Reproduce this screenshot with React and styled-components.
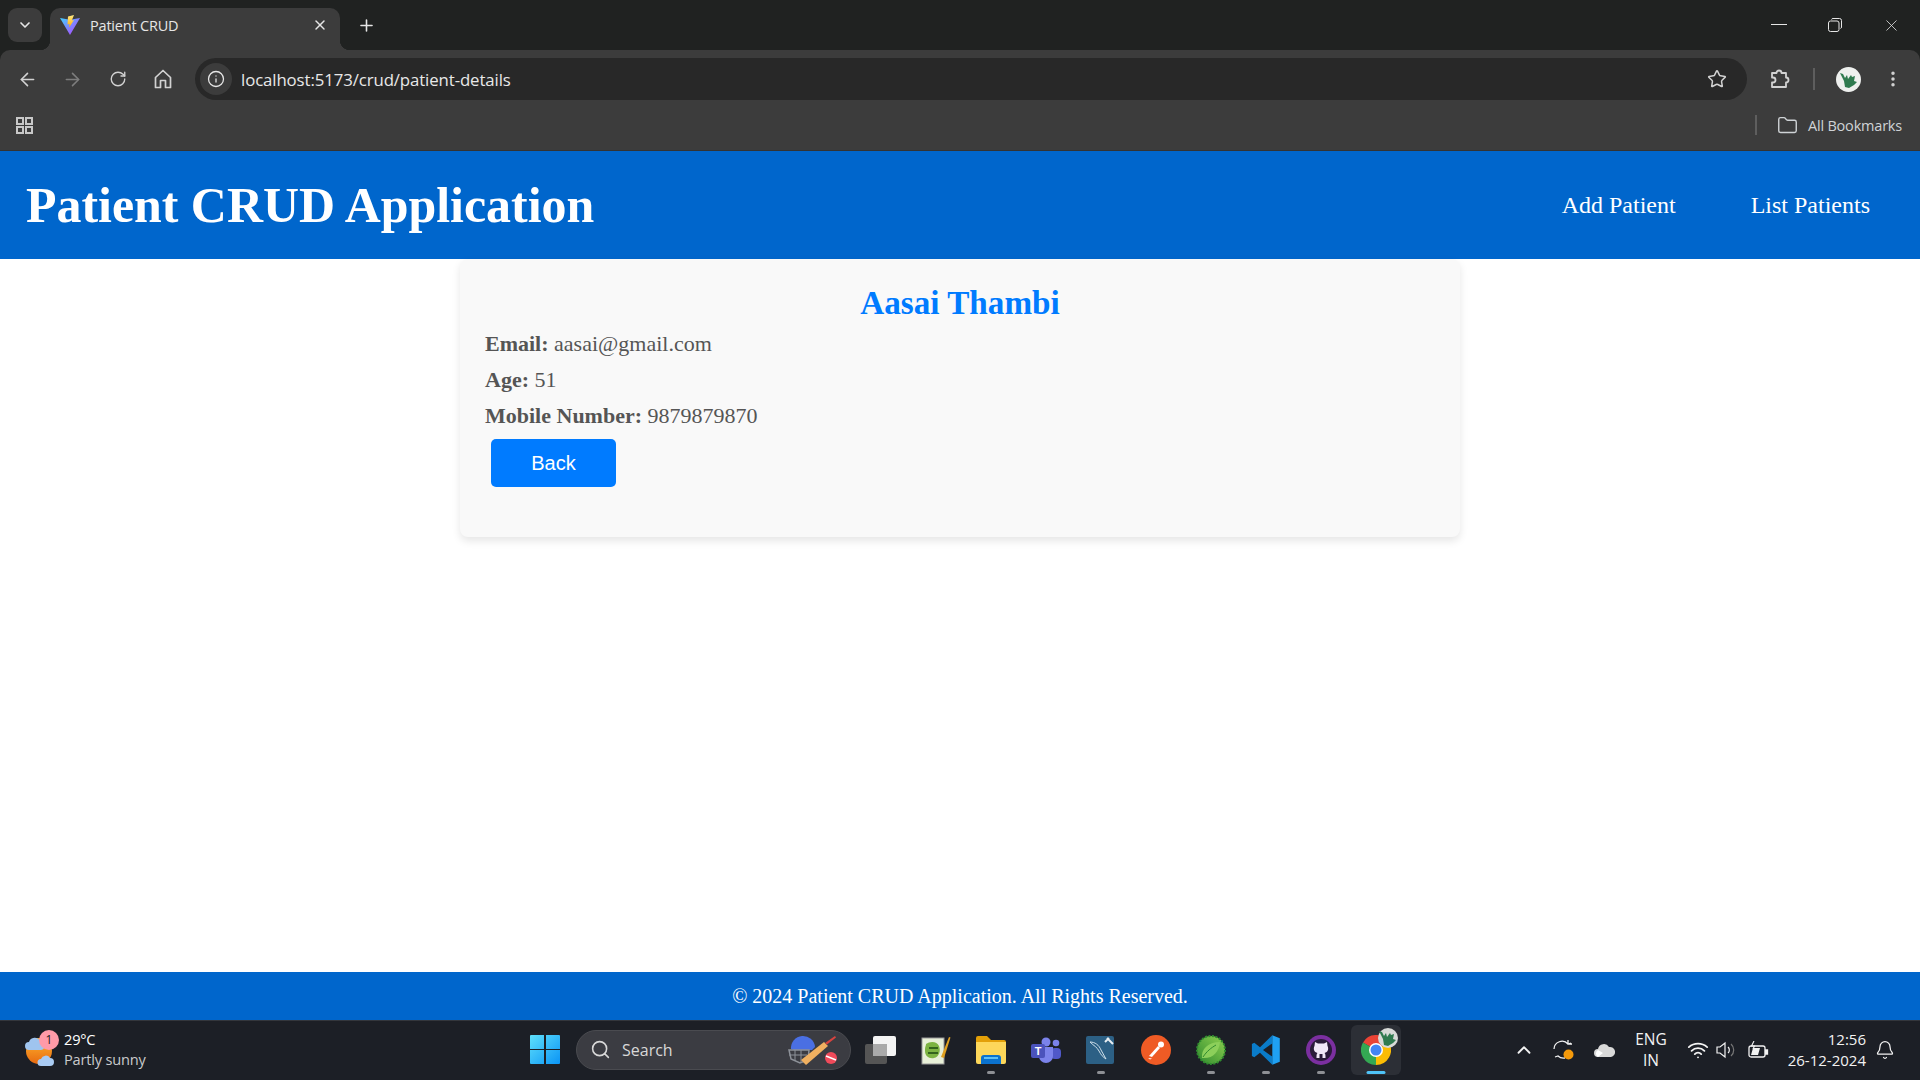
import React from "react";
import styled, { createGlobalStyle } from "styled-components";
import {
  ArrowLeft, ArrowRight, RotateCw, Info, Star, EllipsisVertical, Folder, X, Plus,
  ChevronDown, ChevronUp, Search, Wifi, Bell,
} from "lucide-react";

const Global = createGlobalStyle`
  html, body { margin: 0; padding: 0; height: 100%; background: #fff; }
  #root { height: 100%; }
  * { box-sizing: border-box; }
`;

const Screen = styled.div`
  width: 1920px;
  height: 1080px;
  display: flex;
  flex-direction: column;
  overflow: hidden;
  background: #202221;
  font-family: "Liberation Serif", "Times New Roman", serif;
`;

/* browser chrome */
const TabStrip = styled.div`
  height: 50px;
  background: #202221;
  display: flex;
  align-items: flex-end;
  padding-left: 8px;
  color: #e6e6e6;
  font-family: "Open Sans", "Noto Sans", sans-serif;
`;
const TabMenu = styled.div`
  width: 34px;
  height: 34px;
  margin: 0 8px 8px 0;
  border-radius: 9px;
  background: #3c3c3c;
  display: flex;
  align-items: center;
  justify-content: center;
`;
const Tab = styled.div`
  width: 290px;
  height: 42px;
  background: #3c3c3c;
  border-radius: 10px 10px 0 0;
  display: flex;
  align-items: center;
  padding: 0 12px 8px 10px;
  font-size: 14.5px;
  letter-spacing: -0.2px;
  position: relative;
  &::before, &::after {
    content: "";
    position: absolute;
    bottom: 0;
    width: 10px;
    height: 10px;
  }
  &::before { left: -10px; background: radial-gradient(circle at 0 0, #202221 10px, #3c3c3c 10.5px); }
  &::after { right: -10px; background: radial-gradient(circle at 100% 0, #202221 10px, #3c3c3c 10.5px); }
`;
const TabTitle = styled.span`
  flex: 1;
  margin-left: 10px;
`;
const NewTab = styled.div`
  width: 52px;
  height: 42px;
  padding-bottom: 8px;
  display: flex;
  align-items: center;
  justify-content: center;
`;
const WindowControls = styled.div`
  margin-left: auto;
  align-self: flex-start;
  display: flex;
  height: 50px;
  align-items: center;
  padding-right: 1px;
`;
const WinBtn = styled.div`
  width: 56px;
  display: flex;
  justify-content: center;
  align-items: center;
`;
const Toolbar = styled.div`
  height: 50px;
  background: #3c3c3c;
  display: flex;
  align-items: flex-start;
  padding: 8px 0 0 5px;
  color: #d2d2d2;
  border-radius: 10px 10px 0 0;
  font-family: "Open Sans", "Noto Sans", sans-serif;
`;
const ToolBtn = styled.div`
  width: ${(p) => p.$w || 45}px;
  height: 42px;
  display: flex;
  align-items: center;
  justify-content: center;
  color: ${(p) => (p.$dim ? "#7d7d7d" : "#d2d2d2")};
`;
const UrlPill = styled.div`
  width: 1552px;
  height: 42px;
  margin-left: 10px;
  background: #282828;
  border-radius: 21px;
  display: flex;
  align-items: center;
  padding: 0 20px 0 5px;
`;
const InfoChip = styled.div`
  width: 32px;
  height: 32px;
  border-radius: 50%;
  background: #3c3c3c;
  display: flex;
  align-items: center;
  justify-content: center;
  color: #e6e6e6;
`;
const UrlText = styled.span`
  flex: 1;
  margin-left: 9px;
  font-size: 16.8px;
  letter-spacing: -0.1px;
  color: #e8e8e8;
`;
const ToolDivider = styled.div`
  width: 2px;
  height: 22px;
  margin-top: 10px;
  background: #5e5e5e;
`;
const Avatar = styled.div`
  width: 25px;
  height: 25px;
  border-radius: 50%;
  background: #eef0ee;
  display: flex;
  align-items: center;
  justify-content: center;
`;
const BookmarksBar = styled.div`
  height: 51px;
  background: #3c3c3c;
  display: flex;
  align-items: center;
  justify-content: space-between;
  padding: 0 18px 0 15px;
  color: #c8c8c8;
  border-bottom: 1px solid #333;
  font-family: "Open Sans", "Noto Sans", sans-serif;
`;
const AllBookmarks = styled.div`
  display: flex;
  align-items: center;
  font-size: 14.5px;
  letter-spacing: -0.2px;
  color: #cfd3d6;
`;
const BmDivider = styled.div`
  width: 2px;
  height: 20px;
  margin-right: 20px;
  background: #5e5e5e;
`;
const BmLabel = styled.span`
  margin-left: 10px;
`;

/* app */
const Header = styled.header`
  height: 108px;
  background: #0066cc;
  color: #fff;
  display: flex;
  align-items: center;
  justify-content: space-between;
  padding: 0 50px 0 26px;
`;
const Title = styled.h1`
  margin: 0;
  font-size: 49.9px;
  font-weight: 700;
`;
const Nav = styled.nav`
  display: flex;
  gap: 75px;
`;
const NavLink = styled.a`
  color: #fff;
  font-size: 24px;
  text-decoration: none;
`;
const Main = styled.main`
  flex: 1;
  background: #fff;
`;
const Card = styled.section`
  width: 1000px;
  height: 278px;
  margin: 0 auto;
  padding: 20px 25px;
  background: #f9f9f9;
  border-radius: 8px;
  box-shadow: 0 4px 8px rgba(0, 0, 0, 0.1);
`;
const Name = styled.h2`
  margin: 0 0 4px;
  text-align: center;
  color: #007bff;
  font-size: 33.2px;
  font-weight: 700;
  line-height: 48px;
`;
const Detail = styled.p`
  margin: 0 0 11px;
  color: #555;
  font-size: 22px;
  line-height: 25px;
`;
const BackButton = styled.button`
  display: block;
  width: 125px;
  height: 48px;
  margin: 0 0 0 6px;
  border: 0;
  border-radius: 5px;
  background: #007bff;
  color: #fff;
  font-family: "Liberation Sans", Arial, sans-serif;
  font-size: 20px;
`;
const Footer = styled.footer`
  height: 48px;
  background: #0066cc;
  color: #fff;
  font-size: 20px;
  display: flex;
  align-items: center;
  justify-content: center;
`;

/* taskbar */
const Taskbar = styled.div`
  height: 60px;
  background: #1c1f26;
  border-top: 1px solid #33363c;
  display: flex;
  align-items: center;
  padding-bottom: 2px;
  color: #fff;
  font-family: "Open Sans", "Noto Sans", sans-serif;
  position: relative;
`;
const Weather = styled.div`
  width: 530px;
  padding-left: 25px;
  display: flex;
  align-items: center;
  gap: 9px;
`;
const WeatherIcon = styled.div`
  position: relative;
  width: 30px;
  height: 34px;
`;
const Badge = styled.span`
  position: absolute;
  top: -3px;
  right: -4px;
  width: 20px;
  height: 20px;
  border-radius: 50%;
  background: #ff9aa8;
  color: #222;
  font-size: 12px;
  display: flex;
  align-items: center;
  justify-content: center;
`;
const WeatherText = styled.div`
  margin-top: -2px;
  font-size: 14.6px;
  line-height: 20px;
  letter-spacing: -0.2px;
`;
const WeatherSub = styled.div`
  color: #c9cacc;
`;
const StartBtn = styled.div`
  width: 46px;
  display: flex;
`;
const SearchPill = styled.div`
  width: 275px;
  height: 40px;
  border-radius: 20px;
  background: #3b3c42;
  border: 1px solid #4a4b50;
  display: flex;
  align-items: center;
  padding: 0 12px 0 13px;
  color: #d8d8d8;
  font-size: 16px;
`;
const SearchLabel = styled.span`
  flex: 1;
  margin-left: 11px;
`;
const Apps = styled.div`
  display: flex;
  align-items: center;
  margin-left: 2px;
`;
const AppSlot = styled.div`
  width: ${(p) => (p.$active ? 50 : 55)}px;
  margin: ${(p) => (p.$active ? "0 2.5px" : "0")};
  height: 50px;
  display: flex;
  align-items: center;
  justify-content: center;
  position: relative;
  border-radius: 6px;
  background: ${(p) => (p.$active ? "#2c2f36" : "transparent")};
  &::after {
    content: "";
    display: ${(p) => (p.$dot || p.$active ? "block" : "none")};
    position: absolute;
    bottom: 1px;
    left: 50%;
    transform: translateX(-50%);
    width: ${(p) => (p.$active ? 19 : 8)}px;
    height: 3px;
    border-radius: 2px;
    background: ${(p) => (p.$active ? "#4fc3f7" : "#8e9095")};
  }
`;
const Tray = styled.div`
  margin-left: auto;
  display: flex;
  align-items: center;
  height: 100%;
  padding-right: 24px;
  color: #f2f2f2;
`;
const TrayItem = styled.div`
  width: ${(p) => p.$w}px;
  display: flex;
  align-items: center;
  justify-content: center;
`;
const Lang = styled.div`
  width: 48px;
  text-align: center;
  font-size: 15.5px;
  line-height: 21px;
  margin: 0 9px 0 3px;
`;
const Clock = styled.div`
  width: 90px;
  text-align: right;
  font-size: 15px;
  line-height: 21px;
  margin: 0 8px 0 0;
`;

const Vite = ({ size = 20 }) => (
  <svg width={size} height={size} viewBox="0 0 20 20">
    <defs>
      <linearGradient id="vg" x1="0" y1="0" x2="1" y2="1">
        <stop offset="0" stopColor="#41d1ff" />
        <stop offset="1" stopColor="#bd34fe" />
      </linearGradient>
      <linearGradient id="vy" x1="0" y1="0" x2="0" y2="1">
        <stop offset="0" stopColor="#ffea83" />
        <stop offset="1" stopColor="#ffa800" />
      </linearGradient>
    </defs>
    <path d="M0 3l10 1.8L20 3l-10 17z" fill="url(#vg)" />
    <path d="M14 0L8 1.5 7.5 9.5l2-.4-.4 3.4L14 5l-2.2.4z" fill="url(#vy)" />
  </svg>
);
const AppsGrid = () => (
  <svg width="19" height="19" viewBox="0 0 19 19" fill="none" stroke="#c8c8c8" strokeWidth="2">
    <rect x="2" y="2" width="6" height="6" /><rect x="11" y="2" width="6" height="6" />
    <rect x="2" y="11" width="6" height="6" /><rect x="11" y="11" width="6" height="6" />
  </svg>
);
const HomeIcon = () => (
  <svg width="18" height="20" viewBox="0 0 18 20" fill="none" stroke="#d2d2d2" strokeWidth="1.7" strokeLinejoin="round">
    <path d="M1.500 8.500L9 1.500l7.500 7v10h-5v-7h-5v7h-5z" />
  </svg>
);
const PuzzleIcon = () => (
  <svg width="22" height="22" viewBox="0 0 22 22" fill="none" stroke="#d2d2d2" strokeWidth="1.800" strokeLinejoin="round">
    <path d="M3 5h4.500a2.500 2.500 0 015 0H17v4.500a2.500 2.500 0 010 5V19H3v-4.500h1a2.500 2.500 0 000-5H3z" />
  </svg>
);
const Restore = () => (
  <svg width="14" height="14" viewBox="0 0 14 14" fill="none" stroke="#e6e6e6" strokeWidth="1">
    <rect x="0.5" y="3" width="10.5" height="10.5" rx="2" />
    <path d="M3.500 1.500Q3.800.5 5 .5h6.500q2 0 2 2V9q0 1.200-1 1.500" />
  </svg>
);
const Dragon = () => (
  <svg width="19" height="17" viewBox="0 0 19 17">
    <path d="M1 2l3 1 2 4 2-3 1 4 3-4 1 2 3-1-1 5 3 1-3 3-5 3-4-1-1-6z" fill="#2f7a4f" />
  </svg>
);
const WeatherArt = () => (
  <svg width="30" height="34" viewBox="0 0 30 34">
    <defs>
      <linearGradient id="sun" x1="0" y1="0" x2="0" y2="1">
        <stop offset="0" stopColor="#ffb52e" /><stop offset="1" stopColor="#e86a10" />
      </linearGradient>
    </defs>
    <circle cx="14" cy="18" r="13" fill="url(#sun)" />
    <path d="M4 17a4 4 0 010-8 6 6 0 0111-1 4.500 4.500 0 011 9z" fill="#9fc4ef" />
    <path d="M16 33a3.500 3.500 0 010-7 5 5 0 019-1 4 4 0 010 8z" fill="#a9cbf3" />
  </svg>
);
const WindowsLogo = () => (
  <svg width="30" height="29" viewBox="0 0 30 29">
    <defs>
      <linearGradient id="win" x1="0" y1="0" x2="1" y2="1">
        <stop offset="0" stopColor="#5fe0fb" /><stop offset="1" stopColor="#0a94f5" />
      </linearGradient>
    </defs>
    <path d="M0 1q0-1 1-1h13v14H0zM16 0h13q1 0 1 1v13H16zM0 15h14v14H1q-1 0-1-1zM16 15h14v13q0 1-1 1H16z" fill="url(#win)" />
  </svg>
);
const Cricket = () => (
  <svg width="50" height="32" viewBox="0 0 50 32">
    <path d="M3 15a12 12 0 0 1 24-2l-3 3H6z" fill="#4a6fe3" />
    <path d="M1 16h20l-1 10-8 3-9-4z" fill="none" stroke="#8d9198" strokeWidth="1.500" />
    <path d="M1 21h18M7 16v11M13 16v12" stroke="#8d9198" />
    <path d="M13 26L36 8l4 4-22 19z" fill="#f0b060" />
    <path d="M37 9l10-7 1 1.500-9 7z" fill="#d9433f" />
    <circle cx="43" cy="24" r="6" fill="#f04a5a" />
    <path d="M38 22l10 4" stroke="#fff" strokeWidth="1.500" />
  </svg>
);
const TaskView = () => (
  <svg width="32" height="28" viewBox="0 0 32 28">
    <rect x="0" y="8" width="22" height="20" rx="2" fill="#555" />
    <rect x="8" y="0" width="23" height="20" rx="2" fill="#f4f4f4" />
    <rect x="8" y="8" width="14" height="12" fill="#aaa" />
  </svg>
);
const Notepad = () => (
  <svg width="30" height="30" viewBox="0 0 30 30">
    <rect x="1" y="3" width="22" height="26" fill="#e8f0d8" stroke="#999" />
    <path d="M5 9c4-3 11-3 13 2s0 11-5 12-9-2-9-7 1-5 1-7z" fill="#7cb342" />
    <path d="M8 13h9M7 18h10" stroke="#1b4a12" strokeWidth="1.500" />
    <path d="M20 22L28 2l1.500.6L23 23z" fill="#e0a020" />
  </svg>
);
const Explorer = () => (
  <svg width="30" height="28" viewBox="0 0 30 28">
    <path d="M0 2q0-2 2-2h9l4 4h13q2 0 2 2v4H0z" fill="#e3a008" />
    <path d="M0 6h30v20q0 2-2 2H2q-2 0-2-2z" fill="#fdd75a" />
    <path d="M5 28v-6q0-3 3-3h14q3 0 3 3v6z" fill="#0b72cf" />
    <rect x="8" y="21" width="14" height="2" fill="#5fc0f5" />
  </svg>
);
const Teams = () => (
  <svg width="30" height="26" viewBox="0 0 30 26">
    <circle cx="25" cy="6" r="3.300" fill="#7b83eb" />
    <rect x="20" y="11" width="10" height="11" rx="4" fill="#5059c9" />
    <circle cx="15" cy="5" r="4.500" fill="#7b83eb" />
    <path d="M8 10h14v9a7 7 0 01-14 0z" fill="#7b83eb" />
    <rect x="0" y="7" width="14" height="14" rx="2" fill="#4b53bc" />
    <text x="7" y="18" textAnchor="middle" fontFamily="Liberation Sans" fontWeight="700" fontSize="11" fill="#fff">T</text>
  </svg>
);
const Workbench = () => (
  <svg width="30" height="30" viewBox="0 0 30 30">
    <rect width="28" height="28" y="1" rx="2" fill="#2c6085" />
    <path d="M4 7c5 0 9 3 11 8l5 9c-3-2-5-4-7-8S8 11 4 7z" fill="none" stroke="#cfe0ea" strokeWidth="1" />
    <path d="M21 3l6 6M19 7l4-4" stroke="#e8eef2" strokeWidth="2" />
  </svg>
);
const Postman = () => (
  <svg width="30" height="30" viewBox="0 0 30 30">
    <circle cx="15" cy="15" r="15" fill="#ef5b25" />
    <path d="M8 21l9-10 2 2-8 9z" fill="#fff" />
    <circle cx="20" cy="9.500" r="3" fill="#fff" />
    <path d="M7 23l4 .5-2 1z" fill="#fff" />
  </svg>
);
const Spring = () => (
  <svg width="30" height="30" viewBox="0 0 30 30">
    <defs>
      <linearGradient id="sp" x1="0" y1="1" x2="1" y2="0">
        <stop offset="0" stopColor="#2f8a2f" /><stop offset="1" stopColor="#8fd14f" />
      </linearGradient>
    </defs>
    <circle cx="15" cy="15" r="14" fill="url(#sp)" stroke="#2f8a2f" strokeWidth="2" strokeDasharray="2 1.500" />
    <path d="M6 23c-1-9 6-16 18-16-1 10-7 17-18 16z" fill="#8ccf5a" />
    <path d="M7 22c4-6 8-9 13-12" stroke="#2f8a2f" fill="none" />
  </svg>
);
const VSCode = () => (
  <svg width="30" height="30" viewBox="0 0 100 100">
    <path d="M71 1L30 41 11 26l-8 4v40l8 4 19-15 41 40V72L40 50l31-22z" fill="#0a7cc9" />
    <path d="M71 1l25 10v78L71 99z" fill="#1fa0f2" />
  </svg>
);
const Github = () => (
  <svg width="30" height="30" viewBox="0 0 30 30">
    <circle cx="15" cy="15" r="15" fill="#7b2fa0" />
    <circle cx="15" cy="15" r="11" fill="#2a1a3a" />
    <path d="M9 7l3 1.500h6L21 7l.5 4c1.500 3 .5 6-3 7 1 1 1 2 1 5h-3v-4h-3v4h-3c0-3 0-4 1-5-3.500-1-4.500-4-3-7z" fill="#f0e6f7" />
  </svg>
);
const Chrome = () => (
  <svg width="30" height="30" viewBox="0 0 30 30">
    <path d="M15 15L2 7.500A15 15 0 0128 7.500z" fill="#ea4335" />
    <path d="M15 15L2 7.500A15 15 0 0015 30z" fill="#34a853" />
    <path d="M15 15l13-7.500A15 15 0 0115 30z" fill="#fbbc04" />
    <circle cx="15" cy="15" r="7" fill="#fff" />
    <circle cx="15" cy="15" r="5.500" fill="#4285f4" />
  </svg>
);
const ChromeBadge = styled.span`
  position: absolute;
  top: 3px;
  right: 3px;
  width: 20px;
  height: 20px;
  border-radius: 50%;
  background: #d8dad8;
  display: flex;
  align-items: center;
  justify-content: center;
`;
const Sync = () => (
  <svg width="22" height="22" viewBox="0 0 22 22" fill="none" stroke="#f2f2f2" strokeWidth="1.300">
    <path d="M1 10a8 8 0 0 1 14-5l3-1M15 1v4h4" />
    <path d="M12 19a8 8 0 0 1-7-2l-3 1" />
    <circle cx="15.500" cy="15.500" r="5" fill="#f59a0b" stroke="none" />
  </svg>
);
const OneDrive = () => (
  <svg width="21" height="14" viewBox="0 0 21 14">
    <path d="M4 14a4 4 0 010-8 6 6 0 0111-2 5 5 0 012 10z" fill="#d9d9d9" />
    <path d="M4 14a4 4 0 010-7l5 3z" fill="#fff" />
  </svg>
);
const Speaker = () => (
  <svg width="20" height="18" viewBox="0 0 20 18" fill="none" stroke="#f2f2f2" strokeWidth="1.200">
    <path d="M1 6h3l5-4v14l-5-4H1z" />
    <path d="M12 6a4 4 0 010 6" />
    <path d="M15 3a8 8 0 010 12" stroke="#777" />
  </svg>
);
const Battery = () => (
  <svg width="21" height="18" viewBox="0 0 21 18" fill="none" stroke="#f2f2f2" strokeWidth="1.300">
    <rect x="1" y="5" width="16" height="11" rx="2" />
    <path d="M17.500 9h2v4h-2z" fill="#f2f2f2" />
    <path d="M3 14h7l2-7H5z" fill="#f2f2f2" stroke="none" />
    <path d="M6 0L3.500 5h3L5 8" strokeWidth="1.100" />
  </svg>
);

const apps = [
  { key: "np", Icon: Notepad },
  { key: "ex", Icon: Explorer, dot: true },
  { key: "te", Icon: Teams },
  { key: "wb", Icon: Workbench, dot: true },
  { key: "pm", Icon: Postman },
  { key: "sp", Icon: Spring, dot: true },
  { key: "vs", Icon: VSCode, dot: true },
  { key: "gh", Icon: Github, dot: true },
];

export default function App() {
  return (
    <Screen>
      <Global />
      <TabStrip>
        <TabMenu><ChevronDown size={16} strokeWidth={2.5} /></TabMenu>
        <Tab>
          <Vite />
          <TabTitle>Patient CRUD</TabTitle>
          <X size={16} strokeWidth={2.2} />
        </Tab>
        <NewTab><Plus size={19} strokeWidth={2} /></NewTab>
        <WindowControls>
          <WinBtn><svg width="16" height="2"><rect width="16" height="1" fill="#e6e6e6" /></svg></WinBtn>
          <WinBtn><Restore /></WinBtn>
          <WinBtn><X size={19} strokeWidth={1} /></WinBtn>
        </WindowControls>
      </TabStrip>
      <Toolbar>
        <ToolBtn><ArrowLeft size={21} strokeWidth={1.8} /></ToolBtn>
        <ToolBtn $dim><ArrowRight size={21} strokeWidth={1.8} /></ToolBtn>
        <ToolBtn><RotateCw size={18} strokeWidth={1.8} /></ToolBtn>
        <ToolBtn><HomeIcon /></ToolBtn>
        <UrlPill>
          <InfoChip><Info size={18} strokeWidth={1.7} /></InfoChip>
          <UrlText>localhost:5173/crud/patient-details</UrlText>
          <Star size={20} strokeWidth={1.8} />
        </UrlPill>
        <ToolBtn $w={66}><PuzzleIcon /></ToolBtn>
        <ToolDivider />
        <ToolBtn $w={66}><Avatar><Dragon /></Avatar></ToolBtn>
        <ToolBtn $w={24}><EllipsisVertical size={20} strokeWidth={2.2} /></ToolBtn>
      </Toolbar>
      <BookmarksBar>
        <AppsGrid />
        <AllBookmarks>
          <BmDivider />
          <Folder size={21} strokeWidth={1.6} />
          <BmLabel>All Bookmarks</BmLabel>
        </AllBookmarks>
      </BookmarksBar>
      <Header>
        <Title>Patient CRUD Application</Title>
        <Nav>
          <NavLink>Add Patient</NavLink>
          <NavLink>List Patients</NavLink>
        </Nav>
      </Header>
      <Main>
        <Card>
          <Name>Aasai Thambi</Name>
          <Detail><strong>Email:</strong> aasai@gmail.com</Detail>
          <Detail><strong>Age:</strong> 51</Detail>
          <Detail><strong>Mobile Number:</strong> 9879879870</Detail>
          <BackButton>Back</BackButton>
        </Card>
      </Main>
      <Footer>© 2024 Patient CRUD Application. All Rights Reserved.</Footer>
      <Taskbar>
        <Weather>
          <WeatherIcon><WeatherArt /><Badge>1</Badge></WeatherIcon>
          <WeatherText>29°C<WeatherSub>Partly sunny</WeatherSub></WeatherText>
        </Weather>
        <StartBtn><WindowsLogo /></StartBtn>
        <SearchPill>
          <Search size={21} strokeWidth={1.8} />
          <SearchLabel>Search</SearchLabel>
          <Cricket />
        </SearchPill>
        <Apps>
          <AppSlot><TaskView /></AppSlot>
          {apps.map(({ key, Icon, dot }) => (
            <AppSlot key={key} $dot={dot}><Icon /></AppSlot>
          ))}
          <AppSlot $active><Chrome /><ChromeBadge><Dragon /></ChromeBadge></AppSlot>
        </Apps>
        <Tray>
          <TrayItem $w={40}><ChevronUp size={22} strokeWidth={2} /></TrayItem>
          <TrayItem $w={40}><Sync /></TrayItem>
          <TrayItem $w={40}><OneDrive /></TrayItem>
          <Lang>ENG<br />IN</Lang>
          <TrayItem $w={28}><Wifi size={22} strokeWidth={2} /></TrayItem>
          <TrayItem $w={28}><Speaker /></TrayItem>
          <TrayItem $w={36}><Battery /></TrayItem>
          <Clock>12:56<br />26-12-2024</Clock>
          <TrayItem $w={22}><Bell size={20} strokeWidth={1.5} /></TrayItem>
        </Tray>
      </Taskbar>
    </Screen>
  );
}
